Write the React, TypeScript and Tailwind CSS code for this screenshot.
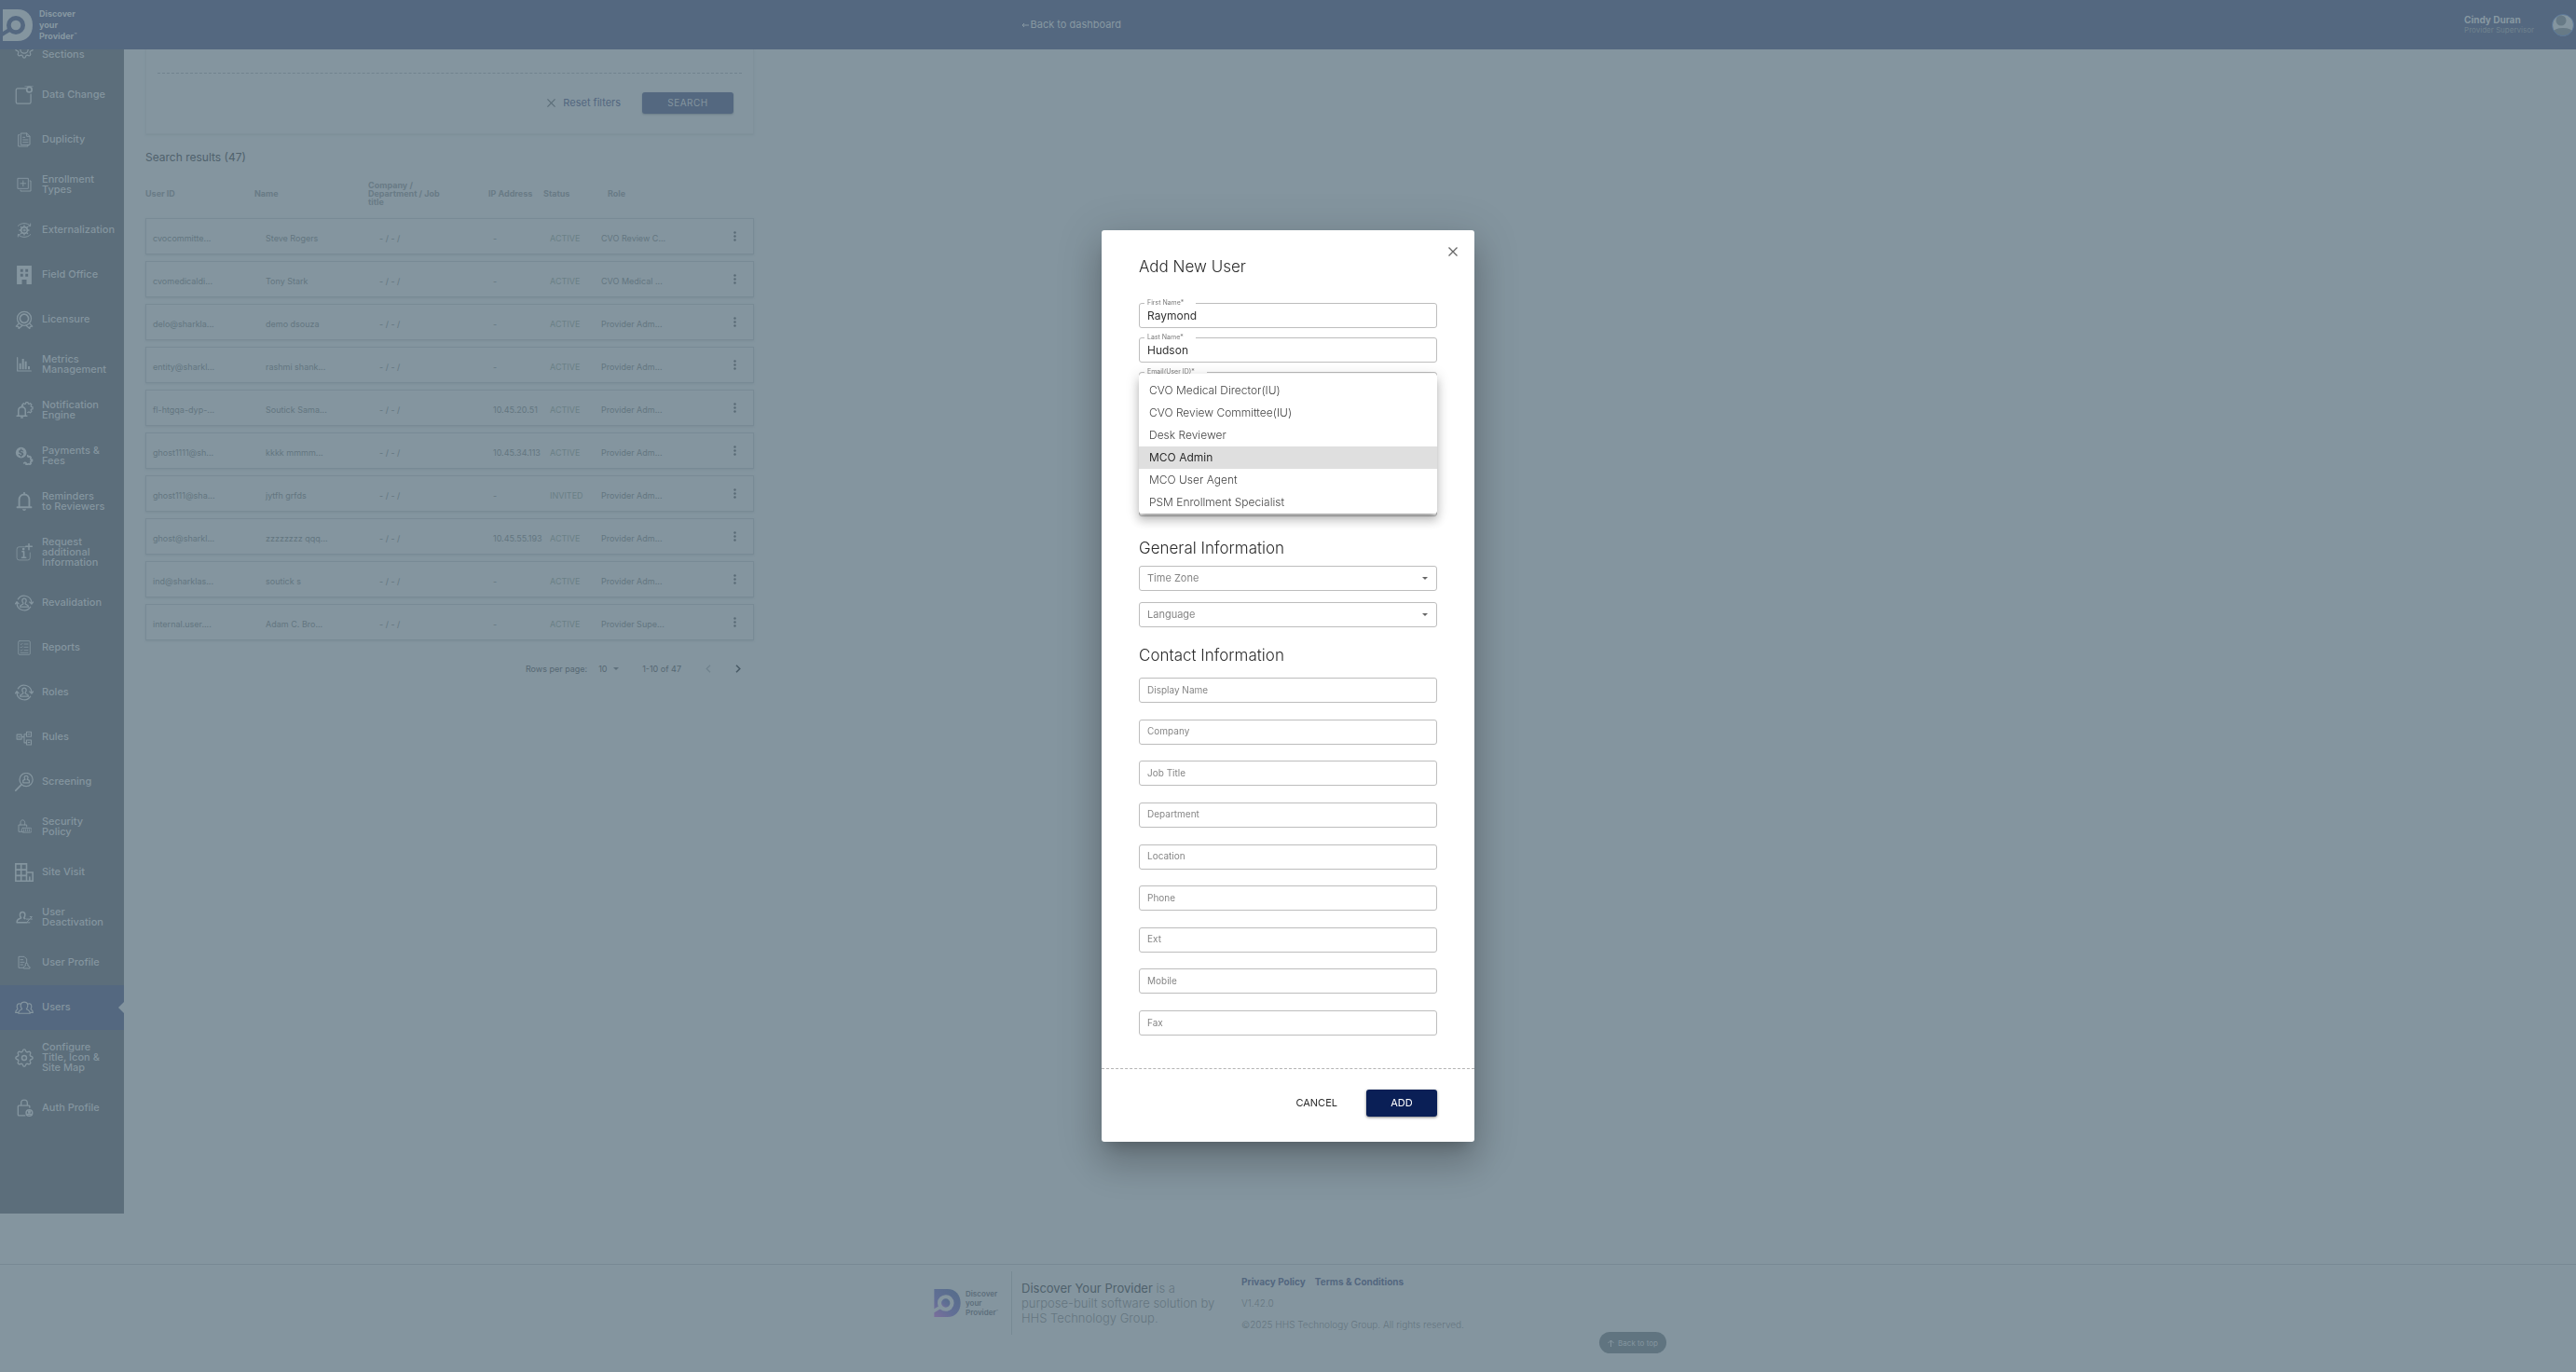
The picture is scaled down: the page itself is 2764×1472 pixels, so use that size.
import React from "react";

type IconProps = { children: React.ReactNode; size?: "sm" | "md" };

function Glyph({ children, size = "md" }: IconProps) {
  return (
    <svg
      viewBox="0 0 24 24"
      className={size === "sm" ? "size-4" : "size-5"}
      fill="none"
      stroke="currentColor"
      strokeWidth="1.5"
      strokeLinecap="round"
      strokeLinejoin="round"
      aria-hidden="true"
    >
      {children}
    </svg>
  );
}

const gearPath =
  "M12 1c1.6 0 1.8 1.300 2.100 2.400.3 1 1.400 1.500 2.400 1 1-.6 2-1.100 3.100 0s.6 2.100 0 3.100c-.5 1 0 2.100 1 2.400 1.100.3 2.400.5 2.400 2.100s-1.300 1.800-2.400 2.100c-1 .3-1.500 1.400-1 2.400.6 1 1.100 2 0 3.100s-2.100.6-3.100 0c-1-.5-2.100 0-2.400 1-.3 1.100-.5 2.400-2.100 2.400s-1.800-1.300-2.100-2.400c-.3-1-1.400-1.500-2.400-1-1 .6-2 1.100-3.100 0s-.6-2.100 0-3.100c.5-1 0-2.100-1-2.400C2.300 13.800 1 13.600 1 12s1.300-1.800 2.400-2.100c1-.3 1.500-1.400 1-2.400-.6-1-1.100-2 0-3.100s2.100-.6 3.100 0c1 .5 2.100 0 2.400-1C10.200 2.300 10.400 1 12 1z";

const Person = () => (
  <path d="M12 6c-2 0-2.600 1.500-2.600 3 0 1.400.5 2.200 1.200 2.900v1.300L7.500 15c-.6.400-.8 1-.8 2h10.600c0-1-.2-1.600-.8-2l-3.100-1.800v-1.300c.7-.7 1.200-1.500 1.200-2.900 0-1.500-.6-3-2.600-3z" />
);

const CycleIcon = () => (
  <Glyph>
    <Person />
    <path d="M4 7A9.500 9.500 0 0 1 21.500 12v1M20 17A9.500 9.500 0 0 1 2.500 12v-1M19 10.800l2.500 2.500 2-2.500M.6 13l1.900-2.500L5 13" />
  </Glyph>
);

const icons: Record<string, React.ReactNode> = {
  sections: (
    <Glyph>
      <path d={gearPath} />
      <circle cx="12" cy="12" r="5" />
    </Glyph>
  ),
  data: (
    <Glyph>
      <path d="M14 3.500H3.500a2 2 0 0 0-2 2V21a2 2 0 0 0 2 2h15a2 2 0 0 0 2-2V11" />
      <circle cx="18.500" cy="5" r="3.300" strokeWidth="2" />
      <path d="M13 .8h10" strokeWidth=".8" />
    </Glyph>
  ),
  duplicity: (
    <Glyph size="sm">
      <path d="M7 1.500h9l5 5V20H7zM16 1.500v5h5M4 4H2.500v18.500H18V20M10 8h3M10 12h8M10 16h8" />
    </Glyph>
  ),
  enrollment: (
    <Glyph size="sm">
      <path d="M2 2h16.500v16.500H2zM21 6h1.500v16.500H6V21M10.200 6v8.500M6 10.200h8.500" />
    </Glyph>
  ),
  external: (
    <Glyph size="sm">
      <circle cx="12" cy="12" r="5" strokeWidth="2.500" />
      <circle cx="12" cy="12" r="1.500" />
      <path d="M12 4.500v2M12 17.500v2M4.500 12h2M17.500 12h2M6.700 6.700l1.400 1.400M16 16l1.400 1.400M17.400 6.700 16 8M8 16l-1.400 1.400" strokeWidth="2" />
      <path d="M2 5C7-.5 17-.5 22 5M22 19c-5 5.500-15 5.500-20 0M22 1.500V5h-3M2 22.500V19h3" />
    </Glyph>
  ),
  office: (
    <Glyph>
      <path
        fill="currentColor"
        stroke="none"
        fillRule="evenodd"
        d="M2.500 0h19v24H15v-6H9v6H2.500zM7 4.500V8h3.500V4.500zm6.500 0V8H17V4.500zM7 10.500V14h3.500v-3.500zm6.500 0V14H17v-3.500z"
      />
    </Glyph>
  ),
  licensure: (
    <Glyph>
      <circle cx="12" cy="10.500" r="9" />
      <circle cx="12" cy="10.500" r="5.500" strokeWidth="2" strokeDasharray="3 .8" />
      <path d="M5 17l-3.500 3.500 3 .3.500 2.700L9.500 19.500M19 17l3.500 3.500-3 .3-.5 2.700-4.500-4" />
    </Glyph>
  ),
  metrics: (
    <Glyph size="sm">
      <path d="M1 1v21.500h22" strokeWidth="1.800" />
      <path d="M5.500 20V10M10 20V3M14.500 20V7M19.500 20v-5" strokeWidth="3" strokeLinecap="butt" />
    </Glyph>
  ),
  notification: (
    <Glyph>
      <path d="M2.500 19.500h13M4.500 19V12.500c0-3 2-4.500 4.500-4.500s4.500 1.500 4.500 4.500V19M9 8V6M8 21.500h2" strokeWidth="1.800" />
      <path d="M10.500 6.500 9.500 5l1.700-1.700 1.600 1 1-.4.400-1.900h2.600l.4 1.900 1 .4 1.600-1L21.500 5l-1 1.600.4 1 1.900.4v2.600l-1.900.4-.4 1 1 1.600-1.700 1.700-1.600-1-1.700.7" />
    </Glyph>
  ),
  payments: (
    <Glyph>
      <path
        fill="currentColor"
        stroke="none"
        fillRule="evenodd"
        d="M8 1a7 7 0 1 1 0 14A7 7 0 0 1 8 1zm-.7 2v1.200C4 4.800 4.300 8 7 8.700c2 .5 2 2 .6 2-1 0-1.500-.4-1.600-1H4.500c.1 1.400 1 2.200 2.800 2.500v1.300h1.400v-1.300c3.300-.5 3.200-3.700.4-4.600-2-.6-1.800-1.900-.7-1.900.8 0 1.200.4 1.300 1h1.500c-.1-1.400-1-2.200-2.500-2.500V3z"
      />
      <path d="M16.500 11.500v1.300l1.500.7 1.300-.8 1.400 1.400-.7 1.400.6 1.500h1.600v2h-1.600l-.7 1.500.8 1.300-1.400 1.400-1.400-.8-1.500.7V23h-2v-1.600l-1.500-.7-1.300.8" strokeWidth="2" />
    </Glyph>
  ),
  reminders: (
    <Glyph>
      <path d="M3 19.500h18M5.500 19v-9c0-4 2.500-7 6.500-7s6.500 3 6.500 7v9M12 3V1" strokeWidth="2.200" />
      <path d="M9.500 22h5c-.5 1.500-1.200 2-2.500 2s-2-.5-2.500-2z" fill="currentColor" stroke="none" />
    </Glyph>
  ),
  request: (
    <Glyph>
      <path d="M14 4.500H5.500a3 3 0 0 0-3 3v11a3 3 0 0 0 3 3h11a3 3 0 0 0 3-3V12" strokeWidth="1" />
      <path d="M18 0v8M14 4h8" strokeWidth="1.800" />
      <path d="M9.500 10.500h2V18M9 18.300h5" strokeWidth="2" />
      <circle cx="11" cy="7.300" r=".9" fill="currentColor" />
    </Glyph>
  ),
  cycle: <CycleIcon />,
  reports: (
    <Glyph size="sm">
      <rect x="2.500" y="1" width="19" height="22" rx="2" strokeWidth="1.200" />
      <path d="M6 6l1 1 2-2M6 11l1 1 2-2M6 16l1 1 2-2M12 6h6M12 11h6M12 16h6M6 20h12" strokeWidth="1.200" />
    </Glyph>
  ),
  rules: (
    <Glyph>
      <path d="M2.500 8.500h6v6h-6zM15 5h6v6h-6zM15 15.500h6v6h-6zM8.500 11.500H12M15 8h-3v11h3M4.500 11.500h2M17 8h2M17 18.500h2" strokeWidth="1.300" />
    </Glyph>
  ),
  screening: (
    <Glyph>
      <circle cx="14.500" cy="9" r="8.500" />
      <path d="M8.300 15.500 1 23" strokeWidth="2" />
      <path d="M14.500 4c-1.700 0-2.300 1.200-2.300 2.400 0 1 .4 1.700 1 2.200L10.500 10v3h8v-3l-2.700-1.400c.6-.5 1-1.200 1-2.200 0-1.200-.6-2.400-2.300-2.400z" />
    </Glyph>
  ),
  security: (
    <Glyph size="sm">
      <path d="M11 20H3V9h13v3M6 9V5c0-5 7-5 7 0v4" />
      <rect x="8" y="14" width="16" height="7" rx="2" />
      <path d="M11.500 16.500v2M14.500 16.500v2M17.500 16.500v2M20.500 16.500v2" />
    </Glyph>
  ),
  site: (
    <Glyph>
      <path d="M1 1h14v22H1zM15 12h8v11h-8M8 1v22M1 8.500h14M1 16h14M19 23v-5" strokeWidth="1.900" strokeLinejoin="miter" />
    </Glyph>
  ),
  deactivation: (
    <Glyph>
      <path d="M15 19H2.500c0-2.500.5-3.500 2-4.300L8 13c-1-1-1.500-2.300-1.500-4C6.500 7 7.500 5.500 9.800 5.500S13 7 13 9c0 1.700-.5 3-1.500 4l1.500 1" strokeWidth="1.800" />
      <path d="M15 14.500h4L15 19h4M19.500 11.500h2.500l-2.500 3H22" strokeWidth="1.200" />
    </Glyph>
  ),
  profile: (
    <Glyph size="sm">
      <path d="M10 20H3V2h9l4 4v5M6 7h4M6 11h6M6 15h4" />
      <path d="M15.500 12c-2 0-2.500 2.500-1 4.500l-3.500 2V21h10v-2.500l-3.500-2c1.500-2 0-4.500-2-4.500z" />
    </Glyph>
  ),
  users: (
    <Glyph>
      <path d="M5 19.500h14.500c0-2.500-1-4-4.500-5.500 1.500-2 1.800-4 1.500-5.700C16 6 14 5 12 5S8 6 7.500 8.300C7.200 10 7.500 12 9 14c-3.500 1.500-4.500 3-4.500 5.500zM4.500 18.500H.8c0-2.500.5-3.500 2.700-4.500C2 11 2.500 7.500 5 7c1-.2 1.800 0 2.500.5M19.500 18.500h3.700c0-2.500-.5-3.500-2.700-4.500 1.500-3 1-6.500-1.500-7-1-.2-1.800 0-2.500.5" strokeWidth="1.400" />
    </Glyph>
  ),
  gear: (
    <Glyph>
      <path d={gearPath} strokeWidth="1.700" />
      <circle cx="12" cy="12" r="3" strokeWidth="1.700" />
    </Glyph>
  ),
  auth: (
    <Glyph>
      <path d="M13 21.500H5a1 1 0 0 1-1-1V9.500a1 1 0 0 1 1-1h13a1 1 0 0 1 1 1V11M8 8.500V5c0-5 8-5 8 0v3.500" strokeWidth="1.600" />
      <circle cx="18.500" cy="18" r="4" strokeWidth="1.800" />
      <circle cx="18.500" cy="16.500" r="1.200" fill="currentColor" />
      <path d="M16 20.500c1-1.500 4-1.500 5 0" strokeWidth="2" />
    </Glyph>
  ),
};

const navItems: { icon: string; lines: string[]; active?: boolean }[] = [
  { icon: "sections", lines: ["\u00a0", "Sections"] },
  { icon: "data", lines: ["Data Change"] },
  { icon: "duplicity", lines: ["Duplicity"] },
  { icon: "enrollment", lines: ["Enrollment", "Types"] },
  { icon: "external", lines: ["Externalization"] },
  { icon: "office", lines: ["Field Office"] },
  { icon: "licensure", lines: ["Licensure"] },
  { icon: "metrics", lines: ["Metrics", "Management"] },
  { icon: "notification", lines: ["Notification", "Engine"] },
  { icon: "payments", lines: ["Payments &", "Fees"] },
  { icon: "reminders", lines: ["Reminders", "to Reviewers"] },
  { icon: "request", lines: ["Request", "additional", "Information"] },
  { icon: "cycle", lines: ["Revalidation"] },
  { icon: "reports", lines: ["Reports"] },
  { icon: "cycle", lines: ["Roles"] },
  { icon: "rules", lines: ["Rules"] },
  { icon: "screening", lines: ["Screening"] },
  { icon: "security", lines: ["Security", "Policy"] },
  { icon: "site", lines: ["Site Visit"] },
  { icon: "deactivation", lines: ["User", "Deactivation"] },
  { icon: "profile", lines: ["User Profile"] },
  { icon: "users", lines: ["Users"], active: true },
  { icon: "gear", lines: ["Configure", "Title, Icon &", "Site Map"] },
  { icon: "auth", lines: ["Auth Profile"] },
];

const users = [
  ["cvocommitte...", "Steve Rogers", "-", "ACTIVE", "CVO Review C..."],
  ["cvomedicaldi...", "Tony Stark", "-", "ACTIVE", "CVO Medical ..."],
  ["delo@sharkla...", "demo dsouza", "-", "ACTIVE", "Provider Adm..."],
  ["entity@sharkl...", "rashmi shank...", "-", "ACTIVE", "Provider Adm..."],
  ["fl-htgqa-dyp-...", "Soutick Sama...", "10.45.20.51", "ACTIVE", "Provider Adm..."],
  ["ghost1111@sh...", "kkkk mmmm...", "10.45.34.113", "ACTIVE", "Provider Adm..."],
  ["ghost111@sha...", "jytfh grfds", "-", "INVITED", "Provider Adm..."],
  ["ghost@sharkl...", "zzzzzzzz qqq...", "10.45.55.193", "ACTIVE", "Provider Adm..."],
  ["ind@sharklas...", "soutick s", "-", "ACTIVE", "Provider Adm..."],
  ["internal.user....", "Adam C. Bro...", "-", "ACTIVE", "Provider Supe..."],
];

const roles = [
  "CVO Medical Director(IU)",
  "CVO Review Committee(IU)",
  "Desk Reviewer",
  "MCO Admin",
  "MCO User Agent",
  "PSM Enrollment Specialist",
];

const contactFields = [
  "Display Name",
  "Company",
  "Job Title",
  "Department",
  "Location",
  "Phone",
  "Ext",
  "Mobile",
  "Fax",
];

function LogoMark({ className, fill, cut }: { className: string; fill: string; cut: string }) {
  return (
    <svg viewBox="0 0 32 34" className={className} aria-hidden="true">
      <defs>
        <linearGradient id="brand" x1="0.8" y1="0" x2="0" y2="1">
          <stop offset="0" stopColor="#566d8b" />
          <stop offset="0.6" stopColor="#626f96" />
          <stop offset="1" stopColor="#7b6f9c" />
        </linearGradient>
      </defs>
      <path d="M0 0h16c10 0 16 7 16 17s-6 17-16 17H0z" fill={fill} />
      <path d="M8 21.500-1 27" stroke={cut} strokeWidth="4" />
      <circle cx="14" cy="17" r="10" fill={cut} />
      <circle cx="14" cy="17" r="5.300" fill={fill} />
    </svg>
  );
}

function FloatingField({ id, label, value }: { id: string; label: string; value: string }) {
  return (
    <div className="relative">
      <input
        id={id}
        defaultValue={value}
        className="block h-[27px] w-full rounded-[3px] border border-[#bdbdbd] px-2 text-[12px] text-[#333]"
      />
      <label
        htmlFor={id}
        className="absolute -top-1 left-[6px] bg-white pr-[13px] pl-[3px] text-[7px] leading-[8px] text-[#7b7b7b]"
      >
        {label}
      </label>
    </div>
  );
}

function SelectField({ label }: { label: string }) {
  return (
    <div className="relative">
      <select
        aria-label={label}
        className="block h-[27px] w-full appearance-none rounded-[3px] border border-[#bdbdbd] bg-white px-2 pb-px text-[11px] text-[#858585]"
      >
        <option>{label}</option>
      </select>
      <svg viewBox="0 0 6 3" className="pointer-events-none absolute top-3 right-[10px] h-[3px] w-[6px]" aria-hidden="true">
        <path d="M0 0h6L3 3z" fill="#666" />
      </svg>
    </div>
  );
}

function Cross({ className }: { className: string }) {
  return (
    <svg viewBox="0 0 10 10" className={className} fill="none" stroke="currentColor" strokeWidth="1.300" aria-hidden="true">
      <path d="M.5.5l9 9M9.500.5l-9 9" />
    </svg>
  );
}

function Header() {
  return (
    <header className="relative z-10 flex h-[53px] shrink-0 items-center bg-[#546880] pr-[2px] pl-[3px] text-[#8798a2]">
      <div className="flex w-[39.6%] items-center gap-[7px]">
        <LogoMark className="h-[34px] w-8" fill="#84959f" cut="#546880" />
        <span className="text-[9px] leading-[12px] font-bold">
          Discover
          <br />
          your
          <br />
          Provider<sup className="text-[5px]">™</sup>
        </span>
      </div>
      <a href="#dashboard" className="flex items-center gap-[2px] text-[11px]">
        <svg viewBox="0 0 8 8" className="size-2" fill="none" stroke="currentColor" aria-hidden="true">
          <path d="M8 4H1M3 2 1 4l2 2" />
        </svg>
        Back to dashboard
      </a>
      <div className="flex flex-1 items-center justify-end gap-[19px]">
        <div>
          <p className="text-[10px] leading-[11px] font-bold">Cindy Duran</p>
          <p className="text-[8px] leading-[11px] text-[#70838f]">Provider Supervisor</p>
        </div>
        <svg viewBox="0 0 24 24" className="size-6" aria-hidden="true">
          <defs>
            <clipPath id="avatar">
              <circle cx="12" cy="12" r="11.500" />
            </clipPath>
          </defs>
          <g clipPath="url(#avatar)">
            <rect width="24" height="24" fill="#84959f" />
            <circle cx="10" cy="7" r="5.500" fill="#677a86" />
            <ellipse cx="12" cy="20" rx="11" ry="5" fill="#677a86" />
          </g>
          <circle cx="12" cy="12" r="11.500" fill="none" stroke="#5a7798" />
        </svg>
      </div>
    </header>
  );
}

function Sidebar() {
  return (
    <nav className="mb-[54px] w-[133px] shrink-0 bg-[#5c6e7b] text-[#84959f]">
      <ul className="-mt-6">
        {navItems.map((item, i) => (
          <li key={i}>
            <a
              href="#nav"
              className={
                item.active
                  ? "relative flex min-h-12 items-center gap-[9px] bg-[#546880] pt-[13px] pb-[14px] pl-4"
                  : "flex min-h-12 items-center gap-[9px] pt-[13px] pb-[14px] pl-4"
              }
            >
              <span className="flex w-5 shrink-0 justify-center">{icons[item.icon]}</span>
              <span className="text-[11px] leading-[11px] font-medium whitespace-nowrap">
                {item.lines.map((line) => (
                  <span key={line} className="block">
                    {line}
                  </span>
                ))}
              </span>
              {item.active && (
                <svg viewBox="0 0 6 12" className="absolute top-[18px] right-0 h-3 w-[6px]" aria-hidden="true">
                  <path d="M6 0v12L0 6z" fill="#84959f" />
                </svg>
              )}
            </a>
          </li>
        ))}
      </ul>
    </nav>
  );
}

function Results() {
  return (
    <section className="w-full max-w-[653px]">
      <div className="border border-t-0 border-[#80919b] px-3 shadow-[0_1px_2px_#7c8e98]">
        <div className="h-[26px] border-b border-dashed border-[#71838e]" />
        <div className="flex h-16 items-center justify-end gap-[23px] pr-[9px] pb-[2px]">
          <button className="flex items-center gap-2 text-[11px] text-[#53677f]">
            <Cross className="size-[9px] text-[#5b6d78]" />
            Reset filters
          </button>
          <button className="h-[23px] w-[98px] rounded-[3px] bg-[#546880] text-[10px] tracking-wider text-[#84959f] shadow-[0_1px_2px_#6b7d88]">
            SEARCH
          </button>
        </div>
      </div>
      <h2 className="mt-[14px] text-[12px] leading-[22px] text-[#50626d]">Search results (47)</h2>
      <table className="w-full table-fixed border-separate border-spacing-x-0 border-spacing-y-[7px] text-left text-[9px] text-[#63757f]">
        <colgroup>
          <col className="w-[117px]" />
          <col className="w-[122px]" />
          <col className="w-[129px]" />
          <col className="w-[59px]" />
          <col className="w-[58px]" />
          <col />
          <col className="w-10" />
        </colgroup>
        <thead>
          <tr className="h-10 leading-[9px] text-[#697b86]">
            <th className="p-0 font-bold">User ID</th>
            <th className="p-0 font-bold">Name</th>
            <th className="p-0 font-bold">
              Company /<br />
              Department / Job
              <br />
              title
            </th>
            <th className="p-0 font-bold whitespace-nowrap">IP Address</th>
            <th className="p-0 font-bold">Status</th>
            <th className="p-0 pl-[11px] font-bold">Role</th>
            <th className="p-0" aria-label="Actions" />
          </tr>
        </thead>
        <tbody>
          {users.map((u) => (
            <tr key={u[0]} className="h-[39px] shadow-[0_1px_2px_#7b8d97]">
              <td className="border-y border-l border-[#788a95] p-0 pt-1 pl-[7px]">{u[0]}</td>
              <td className="border-y border-[#788a95] p-0 pt-1 pl-3">{u[1]}</td>
              <td className="border-y border-[#788a95] p-0 pt-1 pl-3">- / - /</td>
              <td className="border-y border-[#788a95] p-0 pt-1 pl-[5px] whitespace-nowrap">{u[2]}</td>
              <td className="border-y border-[#788a95] p-0 pt-1 pl-[7px] text-[#6a8086]">{u[3]}</td>
              <td className="border-y border-[#788a95] p-0 pt-1 pl-1">{u[4]}</td>
              <td className="border-y border-r border-[#788a95] p-0 pl-[18px]">
                <button aria-label={"Actions for " + u[1]} className="flex h-3 w-1 items-center">
                  <svg viewBox="0 0 3 11" className="h-[11px] w-[3px]" fill="#586a75" aria-hidden="true">
                    <circle cx="1.500" cy="1.500" r="1.200" />
                    <circle cx="1.500" cy="5.500" r="1.200" />
                    <circle cx="1.500" cy="9.500" r="1.200" />
                  </svg>
                </button>
              </td>
            </tr>
          ))}
        </tbody>
      </table>
      <div className="mt-4 flex items-center justify-end pr-[14px] text-[9px] leading-[15px] text-[#566873]">
        <label htmlFor="rows-per-page">Rows per page:</label>
        <span className="relative ml-3 block w-[22px]">
          <select id="rows-per-page" className="block w-full appearance-none">
            <option>10</option>
          </select>
          <svg viewBox="0 0 6 3" className="pointer-events-none absolute top-[6px] right-0 h-[3px] w-[6px]" aria-hidden="true">
            <path d="M0 0h6L3 3z" fill="#5f717c" />
          </svg>
        </span>
        <span className="ml-[25px]">1-10 of 47</span>
        <button aria-label="Previous page" className="ml-[26px] text-[#71838e]">
          <svg viewBox="0 0 6 9" className="h-[9px] w-[6px]" fill="none" stroke="currentColor" strokeWidth="1.300">
            <path d="M5 .8 1.200 4.500 5 8.200" />
          </svg>
        </button>
        <button aria-label="Next page" className="ml-[26px] text-[#485a65]">
          <svg viewBox="0 0 6 9" className="h-[9px] w-[6px]" fill="none" stroke="currentColor" strokeWidth="1.500">
            <path d="M1 .8l3.800 3.700L1 8.200" />
          </svg>
        </button>
      </div>
    </section>
  );
}

function Footer() {
  return (
    <footer className="relative h-[116px] shrink-0 border-t border-[#778994]">
      <div className="mx-auto flex w-full max-w-[760px] pt-[7px] text-[#64767f]">
        <div className="flex h-[68px] w-[84px] items-center gap-[5px] border-r border-[#778994]">
          <LogoMark className="h-[30px] w-[29px]" fill="url(#brand)" cut="#84959f" />
          <span className="text-[8px] leading-[10px] font-semibold text-[#5c6e7b]">
            Discover
            <br />
            your
            <br />
            Provider<sup className="text-[4px]">™</sup>
          </span>
        </div>
        <p className="ml-[10px] w-[236px] pt-[10px] text-[13px] leading-4 font-light">
          <span className="font-normal text-[#4f616c]">Discover Your Provider</span> is a
          <br />
          purpose-built software solution by
          <br />
          HHS Technology Group.
        </p>
        <div className="text-[10px] leading-[23px] font-light">
          <p className="flex gap-[10px] font-bold text-[#53677f]">
            <a href="#privacy">Privacy Policy</a>
            <a href="#terms">Terms &amp; Conditions</a>
          </p>
          <p>V1.42.0</p>
          <p>©2025 HHS Technology Group. All rights reserved.</p>
        </div>
      </div>
      <button className="absolute bottom-5 left-1/2 ml-[334px] flex h-[23px] w-[72px] items-center justify-center gap-1 rounded-full bg-[#607480] text-[8px] text-[#84959f]">
        <svg viewBox="0 0 7 8" className="h-2 w-[7px]" fill="none" stroke="currentColor" aria-hidden="true">
          <path d="M3.500 8V1M.5 4l3-3 3 3" />
        </svg>
        Back to top
      </button>
    </footer>
  );
}

function AddUserDialog() {
  return (
    <div className="fixed inset-0 z-20 flex items-center justify-center">
      <form
        role="dialog"
        aria-labelledby="dialog-title"
        className="relative w-[400px] rounded-[3px] bg-white text-[#2b2b2b] shadow-[0_11px_15px_-7px_rgba(0,0,0,0.2),0_24px_38px_3px_rgba(0,0,0,0.14),0_9px_46px_8px_rgba(0,0,0,0.12)]"
      >
        <button type="button" aria-label="Close" className="absolute top-[18px] right-[18px] text-[#666]">
          <Cross className="size-[10px]" />
        </button>
        <div className="px-10">
          <h1 id="dialog-title" className="pt-[27px] text-[17px] leading-6 font-light">
            Add New User
          </h1>
          <div className="mt-[27px] flex flex-col gap-[10px]">
            <FloatingField id="first-name" label="First Name*" value="Raymond" />
            <FloatingField id="last-name" label="Last Name*" value="Hudson" />
            <div className="relative flex h-[155px] flex-col justify-between">
              <FloatingField id="email" label="Email(User ID)*" value="" />
              <SelectField label="Role" />
              <ul
                role="listbox"
                aria-label="Role"
                className="absolute inset-x-0 top-[2px] z-10 h-[150px] rounded-[3px] bg-white pt-[6px] text-[12px] leading-6 font-light text-[#444] shadow-[0_5px_5px_-3px_rgba(0,0,0,0.2),0_8px_10px_1px_rgba(0,0,0,0.14),0_3px_14px_2px_rgba(0,0,0,0.12)]"
              >
                {roles.map((role) => (
                  <li
                    key={role}
                    role="option"
                    aria-selected={role === "MCO Admin"}
                    className={role === "MCO Admin" ? "bg-[#dfdfdf] px-[11px] font-normal text-[#2b2b2b]" : "px-[11px]"}
                  >
                    {role}
                  </li>
                ))}
              </ul>
            </div>
          </div>
          <h2 className="mt-[22px] text-[17px] leading-6 font-light">General Information</h2>
          <div className="mt-[7px] flex flex-col gap-3">
            <SelectField label="Time Zone" />
            <SelectField label="Language" />
          </div>
          <h2 className="mt-[18px] text-[17px] leading-6 font-light">Contact Information</h2>
          <div className="mt-3 flex h-96 flex-col justify-between">
            {contactFields.map((field) => (
              <input
                key={field}
                aria-label={field}
                placeholder={field}
                className="block h-[27px] w-full rounded-[3px] border border-[#bdbdbd] px-2 pb-[2px] text-[10px] placeholder:text-[#858585]"
              />
            ))}
          </div>
        </div>
        <div className="mt-[35px] flex items-center justify-end gap-[31px] border-t border-dashed border-[#b5b5b5] px-10 pt-[22px] pb-[27px] text-[11px]">
          <button type="button">CANCEL</button>
          <button
            type="button"
            className="h-[29px] w-[76px] rounded-[3px] bg-[#0a1f56] text-white shadow-[0_1px_3px_rgba(0,0,0,0.5)]"
          >
            ADD
          </button>
        </div>
      </form>
    </div>
  );
}

export default function App() {
  return (
    <div className="flex min-h-screen flex-col bg-[#84959f] font-['Inter',sans-serif]">
      <Header />
      <div className="flex flex-1">
        <Sidebar />
        <main className="flex-1 pl-[23px]">
          <Results />
        </main>
      </div>
      <Footer />
      <AddUserDialog />
    </div>
  );
}
